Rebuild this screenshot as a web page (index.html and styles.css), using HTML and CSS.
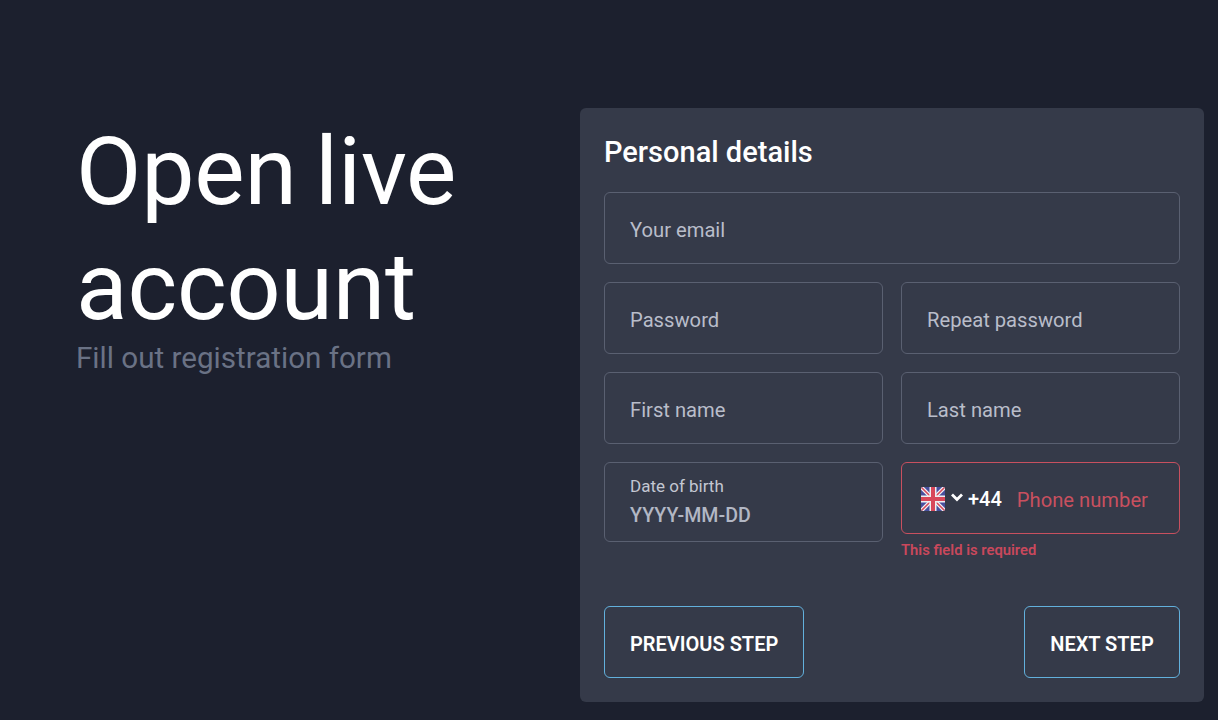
FILE: index.html
```html
<!DOCTYPE html>
<html lang="en">
<head>
    <meta charset="UTF-8">
    <title>Open live account</title>
    <link rel="stylesheet" href="styles.css">
</head>
<body>
    <div class="page">
        <div class="intro">
            <h1>Open live account</h1>
            <p>Fill out registration form</p>
        </div>

        <form class="card">
            <h2>Personal details</h2>

            <div class="field">Your email</div>

            <div class="row">
                <div class="field">Password</div>
                <div class="field">Repeat password</div>
            </div>

            <div class="row">
                <div class="field">First name</div>
                <div class="field">Last name</div>
            </div>

            <div class="row">
                <div class="field field-date">
                    <span class="field-label">Date of birth</span>
                    <span class="field-value">YYYY-MM-DD</span>
                </div>
                <div class="phone-wrap">
                    <div class="field field-phone">
                        <svg class="flag" viewBox="0 0 24 24" width="24" height="24">
                            <rect width="24" height="24" fill="#474f9e"/>
                            <path d="M0 0L24 24M24 0L0 24" stroke="#efeff2" stroke-width="4"/>
                            <path d="M0 0L24 24M24 0L0 24" stroke="#d8475a" stroke-width="1.5"/>
                            <path d="M12 0V24M0 12H24" stroke="#efeff2" stroke-width="7"/>
                            <path d="M12 0V24M0 12H24" stroke="#d8475a" stroke-width="4"/>
                        </svg>
                        <svg class="chevron" viewBox="0 0 14 9" width="14" height="9">
                            <path d="M2 1.5L7 6.5L12 1.5" fill="none" stroke="#fff" stroke-width="2.8"/>
                        </svg>
                        <span class="dial">+44</span>
                        <span class="phone-text">Phone number</span>
                    </div>
                    <div class="error">This field is required</div>
                </div>
            </div>

            <div class="actions">
                <button type="button" class="step-btn">PREVIOUS STEP</button>
                <button type="button" class="step-btn">NEXT STEP</button>
            </div>
        </form>
    </div>
</body>
</html>
```

FILE: styles.css
```css
* {
    margin: 0;
    padding: 0;
    box-sizing: border-box;
    font-family: Roboto, "Liberation Sans", sans-serif;
}

body {
    background-color: #1c202e;
    color: #fff;
    height: 720px;
    overflow: hidden;
}

.page {
    display: flex;
    justify-content: space-between;
    padding: 108px 14px 0 76px;
}

.intro {
    width: 420px;
    padding-top: 6px;
}

h1 {
    font-size: 95px;
    font-weight: 400;
    line-height: 115px;
    word-spacing: -5px;
    letter-spacing: -0.2px;
    color: #fff;
}

.intro p {
    font-size: 29.6px;
    line-height: 36px;
    color: #6a7285;
    margin-top: -4px;
}

.card {
    width: 624px;
    height: 594px;
    background-color: #353a49;
    border-radius: 6px;
    padding: 24px;
}

h2 {
    font-size: 29px;
    font-weight: 500;
    line-height: 40px;
    margin-bottom: 20px;
}

.row {
    display: grid;
    grid-template-columns: 1fr 1fr;
    gap: 18px;
    margin-top: 18px;
    align-items: start;
}

.field {
    height: 72px;
    border: 1px solid #5a6071;
    border-radius: 6px;
    padding: 3px 25px 0;
    display: flex;
    align-items: center;
    font-size: 20.2px;
    color: #b9bdca;
}

.field-date {
    height: 80px;
    flex-direction: column;
    align-items: flex-start;
    justify-content: center;
    padding-top: 4px;
}

.field-label {
    font-size: 17px;
    line-height: 20px;
    margin-top: 1px;
    color: #c3c7d2;
}

.field-value {
    font-size: 19.6px;
    line-height: 34px;
    margin-top: 3px;
    font-weight: 500;
    color: #b2b7c4;
}

.field-phone {
    border-color: #c8505f;
    padding: 2px 19px 0;
}

.flag {
    border-radius: 2px;
    flex-shrink: 0;
}

.chevron {
    margin-left: 5px;
    margin-bottom: 3px;
}

.dial {
    margin-left: 4px;
    font-size: 20px;
    font-weight: 500;
    color: #fff;
}

.phone-text {
    margin-left: 15px;
    padding-top: 1px;
    color: #c8505f;
    white-space: nowrap;
}

.error {
    margin-top: 7px;
    font-size: 14.8px;
    line-height: 18px;
    font-weight: 600;
    color: #c9485c;
}

.actions {
    display: flex;
    justify-content: space-between;
    margin-top: 47px;
}

.step-btn {
    height: 72px;
    min-width: 156px;
    padding: 3px 25px 0;
    background: transparent;
    border: 1px solid #62b0dc;
    border-radius: 6px;
    color: #fff;
    font-size: 20px;
    font-weight: 600;
}
```
